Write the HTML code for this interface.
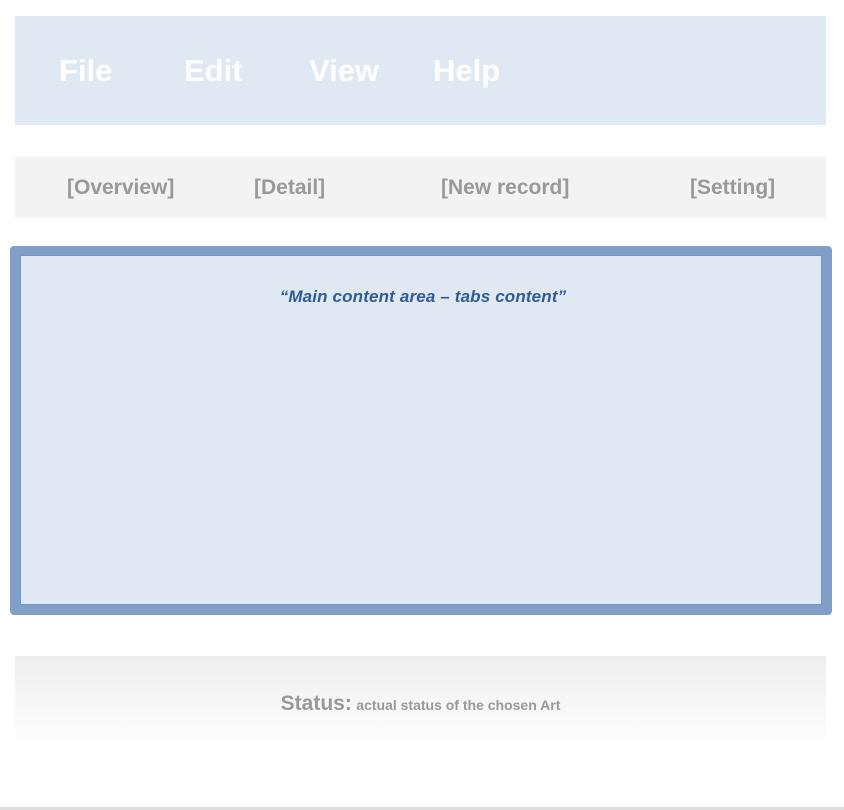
<!DOCTYPE html>
<html><head><style>
body{margin:0;width:844px;height:810px;background:#fff;font-family:"Liberation Sans",sans-serif;position:relative;overflow:hidden}
.a{position:absolute}
.menu{left:15px;top:16px;width:811px;height:109px;background:#dfe8f3}
.menu span{position:absolute;top:37px;color:#fff;font-weight:bold;font-size:31px;line-height:36px}
.tabs{left:15px;top:157px;width:811px;height:61px;background:#f3f3f3}
.tabs span{position:absolute;top:18px;color:#999;font-weight:bold;font-size:21px;line-height:26px}
.main{left:10px;top:246px;width:802px;height:350px;border:10px solid #7f9fc8;border-top-width:9px;background:#dfe8f3;border-radius:4px;box-shadow:inset 0 0 0 1px #7099c8}
.st{left:15px;top:656px;width:811px;height:94px;background:linear-gradient(#eeeeee,#fff)}
</style></head><body>
<div class="a menu"><span style="left:44px">File</span><span style="left:169px">Edit</span><span style="left:294px">View</span><span style="left:418px">Help</span></div>
<div class="a tabs"><span style="left:52px">[Overview]</span><span style="left:239px">[Detail]</span><span style="left:426px">[New record]</span><span style="left:675px">[Setting]</span></div>
<div class="a main"><div style="position:absolute;left:4px;right:0;top:32px;text-align:center;color:#2f5c98;font-weight:bold;font-style:italic;font-size:17px;letter-spacing:0.15px">“Main content area – tabs content”</div></div>
<div class="a st"><div style="position:absolute;left:0;right:0;top:36px;text-align:center;color:#999;font-weight:bold"><span style="font-size:21px">Status:</span> <span style="font-size:14px">actual status of the chosen Art</span></div></div>
<div class="a" style="left:0;top:807px;width:844px;height:3px;background:#ddd"></div>
</body></html>
